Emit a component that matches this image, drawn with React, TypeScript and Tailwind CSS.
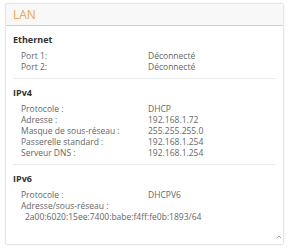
import { ChevronUp } from 'lucide-react';

type Row = { label: string; value?: string; full?: string };

const sections: { title: string; rows: Row[] }[] = [
    {
        title: 'Ethernet',
        rows: [
            { label: 'Port 1:', value: 'Déconnecté' },
            { label: 'Port 2:', value: 'Déconnecté' },
        ],
    },
    {
        title: 'IPv4',
        rows: [
            { label: 'Protocole :', value: 'DHCP' },
            { label: 'Adresse :', value: '192.168.1.72' },
            { label: 'Masque de sous-réseau :', value: '255.255.255.0' },
            { label: 'Passerelle standard :', value: '192.168.1.254' },
            { label: 'Serveur DNS :', value: '192.168.1.254' },
        ],
    },
    {
        title: 'IPv6',
        rows: [
            { label: 'Protocole :', value: 'DHCPV6' },
            { label: 'Adresse/sous-réseau :', full: '2a00:6020:15ee:7400:babe:f4ff:fe0b:1893/64' },
        ],
    },
];

export default function App() {
    return (
        <div
            className="w-[290px] h-[248px] bg-white pt-[3px] pl-[5px]"
            style={{ fontFamily: '"Open Sans", "Liberation Sans", sans-serif' }}
        >
            <div className="relative w-[279px] h-[242px] border border-[#e6e6e6] rounded-[2px] shadow-[0_0_3px_rgba(0,0,0,0.06)] bg-white">
                {/* Header */}
                <div className="h-[22px] bg-[#f8f8f8] border-b border-[#f3cf6e] px-[7px] flex items-center">
                    <span className="text-[12px] leading-none text-[#f2a54a]">LAN</span>
                </div>

                {/* Body */}
                <div className="px-[7px]">
                    {sections.map((s, i) => (
                        <div
                            key={s.title}
                            className={`pt-[7px] pb-[6.5px] ${i < sections.length - 1 ? 'border-b border-[#ececec]' : ''}`}
                        >
                            <div className="text-[9px] leading-[14px] font-bold text-[#333]">{s.title}</div>
                            <div className="mt-[2.5px] pl-[8px]">
                                {s.rows.map(r => (
                                    <div key={r.label}>
                                        <div className="flex text-[8.5px] leading-[11px] text-[#666]">
                                            <span className="w-[127px] shrink-0">{r.label}</span>
                                            {r.value && <span>{r.value}</span>}
                                        </div>
                                        {r.full && (
                                            <div className="pl-[4px] text-[8.5px] leading-[11px] text-[#666]">{r.full}</div>
                                        )}
                                    </div>
                                ))}
                            </div>
                        </div>
                    ))}
                </div>

                <ChevronUp className="absolute right-0 bottom-[3px] w-[8px] h-[8px] text-[#a0a0a0]" strokeWidth={3} />
            </div>
        </div>
    );
}
